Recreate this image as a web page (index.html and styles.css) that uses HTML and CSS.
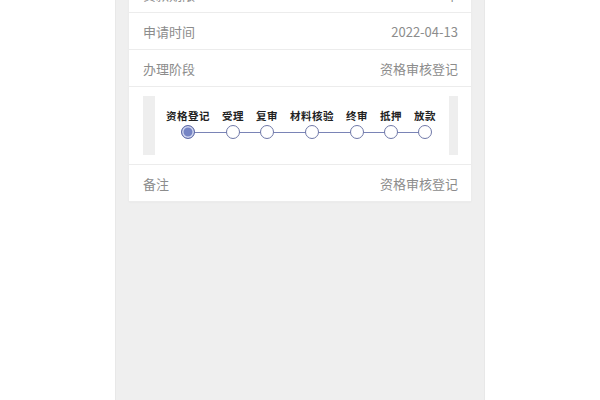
FILE: index.html
```html
<!DOCTYPE html>
<html>
<head>
    <title>办理进度</title>
    <meta name="viewport" content="width=device-width, initial-scale=1.0">
    <link rel="stylesheet" href="styles.css">
</head>
<body>
    <div class="phone">
        <div class="card">
            <div class="row">
                <span class="label">贷款期限</span>
                <span class="value">5年</span>
            </div>
            <div class="row">
                <span class="label">申请时间</span>
                <span class="value">2022-04-13</span>
            </div>
            <div class="row">
                <span class="label">办理阶段</span>
                <span class="value">资格审核登记</span>
            </div>
            <div class="step-row">
                <div class="step-box">
                    <div class="steps">
                        <div class="step-line"></div>
                        <div class="step active"><span>资格登记</span><i></i></div>
                        <div class="step"><span>受理</span><i></i></div>
                        <div class="step"><span>复审</span><i></i></div>
                        <div class="step"><span>材料核验</span><i></i></div>
                        <div class="step"><span>终审</span><i></i></div>
                        <div class="step"><span>抵押</span><i></i></div>
                        <div class="step"><span>放款</span><i></i></div>
                    </div>
                </div>
            </div>
            <div class="row last">
                <span class="label">备注</span>
                <span class="value">资格审核登记</span>
            </div>
        </div>
    </div>
</body>
</html>
```

FILE: styles.css
```css
html, body {
    height: 100%;
}

body {
    margin: 0;
    background-color: #ffffff;
    font-family: "Noto Sans CJK SC", "Noto Sans", sans-serif;
    overflow: hidden;
}

.phone {
    display: flow-root;
    width: 368px;
    height: 100%;
    margin: 0 auto;
    background-color: #efefef;
    box-shadow: -1px 0 0 #e8e8e8, 1px 0 0 #e8e8e8;
    padding: 0 13px;
    box-sizing: border-box;
}

.card {
    background-color: #ffffff;
    margin-top: -24px;
    box-shadow: 0 0 0 1px #ececec, 0 1px 2px rgba(0,0,0,0.06);
}

.row {
    display: flex;
    justify-content: space-between;
    align-items: center;
    height: 36px;
    padding: 0 13px 0 14px;
    border-bottom: 1px solid #ececec;
    font-size: 13px;
    color: #8c8c8c;
}

.row.last {
    border-bottom: none;
}

.step-row {
    padding: 9px 13px 9px 14px;
    border-bottom: 1px solid #ececec;
}

/* box abu kiri-kanan, isinya tahapan */
.step-box {
    height: 59px;
    box-sizing: border-box;
    border-left: 12px solid #eeeeee;
    border-right: 9px solid #eeeeee;
    display: flex;
    align-items: flex-start;
    padding: 14px 0 0 11px;
}

.steps {
    position: relative;
    display: flex;
    gap: 12px;
}

.step-line {
    position: absolute;
    left: 22px;
    right: 12px;
    top: 22px;
    height: 1px;
    background-color: #7a84b6;
}

.step {
    position: relative;
    display: flex;
    flex-direction: column;
    align-items: center;
}

.step span {
    font-size: 10.5px;
    font-weight: bold;
    color: #222;
    line-height: 12px;
    white-space: nowrap;
    letter-spacing: 0.5px;
}

.step i {
    display: block;
    width: 12px;
    height: 12px;
    margin-top: 3px;
    border: 1.5px solid #6f78a8;
    border-radius: 50%;
    background-color: #fff;
}

.step.active i {
    background-color: #7584c4;
    border-color: #5f6ba6;
    box-shadow: inset 0 0 0 1.5px #d3d8f0;
}
```
